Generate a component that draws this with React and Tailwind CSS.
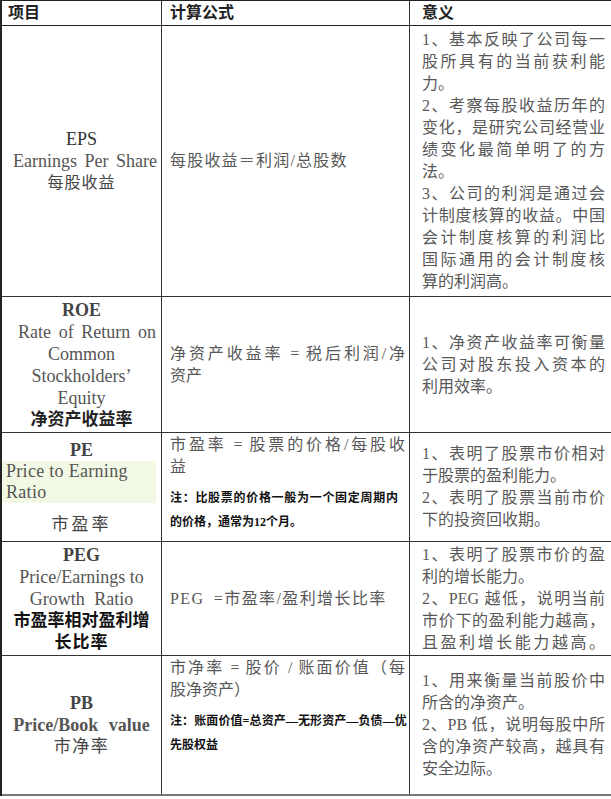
import React from 'react';
import clsx from 'clsx';

const rows = [
  {
    h: 'h-[271px]',
    item: (
      <>
        <L t="EPS" c="text-[18px] text-[#333]" />
        <L t="Earnings Per Share" c="text-[18px] text-[#555] pl-[11px] pr-[4px]" j />
        <L t="每股收益" c="text-[16px] tracking-[1px] text-[#444]" />
      </>
    ),
    formula: <L t="每股收益＝利润/总股数" c="tracking-[1.2px]" />,
    formulaTop: false,
    meaning: [
      ['1、基本反映了公司每一', 1],
      ['股所具有的当前获利能', 1],
      ['力。', 0],
      ['2、考察每股收益历年的', 1],
      ['变化，是研究公司经营业', 1],
      ['绩变化最简单明了的方', 1],
      ['法。', 0],
      ['3、公司的利润是通过会', 1],
      ['计制度核算的收益。中国', 1],
      ['会计制度核算的利润比', 1],
      ['国际通用的会计制度核', 1],
      ['算的利润高。', 0],
    ],
  },
  {
    h: 'h-[136px]',
    item: (
      <>
        <L t="ROE" c="text-[18px] font-bold text-[#444]" />
        <L t="Rate of Return on" c="text-[18px] text-[#555] pl-[16px] pr-[5px]" j />
        <L t="Common" c="text-[18px] text-[#555]" />
        <L t="Stockholders’" c="text-[18px] text-[#555]" />
        <L t="Equity" c="text-[18px] text-[#555]" />
        <L t="净资产收益率" c="text-[17px] font-bold text-[#222]" />
      </>
    ),
    formula: (
      <>
        <L t="净资产收益率 = 税后利润/净" j />
        <L t="资产" />
      </>
    ),
    formulaTop: false,
    meaning: [
      ['1、净资产收益率可衡量', 1],
      ['公司对股东投入资本的', 1],
      ['利用效率。', 0],
    ],
  },
  {
    h: 'h-[109px]',
    item: (
      <>
        <L t="PE" c="text-[18px] font-bold text-[#444]" />
        <div className="mr-[5px] bg-[#f1f8e3] pl-[4px] text-[18px] text-[#555] text-left">
          <div className="h-[21px] leading-[21px] tracking-[0.3px]">Price to Earning</div>
          <div className="h-[21px] leading-[21px] tracking-[0.3px]">Ratio</div>
        </div>
        <L t="市盈率" c="mt-[11px] text-[17px] tracking-[3px] text-[#444]" />
      </>
    ),
    formula: (
      <>
        <L t="市盈率 = 股票的价格/每股收" j />
        <L t="益" />
        <Note t="注：比股票的价格一般为一个固定周期内" c="mt-[8px] tracking-[0.7px]" />
        <Note t="的价格，通常为12个月。" />
      </>
    ),
    formulaTop: true,
    meaning: [
      ['1、表明了股票市价相对', 1],
      ['于股票的盈利能力。', 0],
      ['2、表明了股票当前市价', 1],
      ['下的投资回收期。', 0],
    ],
  },
  {
    h: 'h-[114px]',
    item: (
      <>
        <L t="PEG" c="text-[18px] font-bold text-[#444]" />
        <L t="Price/Earnings to" c="text-[18px] text-[#555]" />
        <L t="Growth Ratio" c="text-[18px] text-[#555] [word-spacing:5px]" />
        <L t="市盈率相对盈利增" c="text-[17px] font-bold text-[#111]" />
        <L t="长比率" c="text-[17px] font-bold text-[#111] tracking-[1px]" />
      </>
    ),
    formula: <L t="PEG =市盈率/盈利增长比率" c="tracking-[1.4px] [word-spacing:4px]" />,
    formulaTop: false,
    meaning: [
      ['1、表明了股票市价的盈', 1],
      ['利的增长能力。', 0],
      ['2、PEG 越低，说明当前', 1],
      ['市价下的盈利能力越高，', 1],
      ['且盈利增长能力越高。', 1],
    ],
  },
  {
    h: 'h-[140px]',
    item: (
      <>
        <L t="PB" c="text-[18px] font-bold text-[#444]" />
        <L t="Price/Book value" c="text-[18px] font-bold text-[#555] [word-spacing:6px]" />
        <L t="市净率" c="text-[17px] tracking-[1.5px] text-[#444]" />
      </>
    ),
    formula: (
      <>
        <L t="市净率 = 股价 / 账面价值（每" j />
        <L t="股净资产）" />
        <Note t="注：账面价值=总资产—无形资产—负债—优" c="mt-[8px] tracking-[0.1px]" />
        <Note t="先股权益" />
      </>
    ),
    formulaTop: true,
    meaning: [
      ['1、用来衡量当前股价中', 1],
      ['所含的净资产。', 0],
      ['2、PB 低，说明每股中所', 1],
      ['含的净资产较高，越具有', 1],
      ['安全边际。', 0],
    ],
  },
];

function L({ t, j, c }) {
  return (
    <div className={clsx('h-[22px] leading-[22px]', j && 'text-justify [text-align-last:justify]', c)}>
      {t}
    </div>
  );
}

function Note({ t, c }) {
  return (
    <div className={clsx('h-[24px] leading-[24px] whitespace-nowrap text-[12px] font-bold text-[#111]', c)}>
      {t}
    </div>
  );
}

export default function App() {
  return (
    <div className="w-[611px] h-[799px] overflow-hidden bg-white font-['Liberation_Serif','Noto_Sans_CJK_SC',serif] text-[16px] text-[#585858]">
      <div className="w-[611px] border-l-2 border-t border-[#222]">
        <div className="grid h-[25px] grid-cols-[160px_248px_201px] border-b border-[#222]">
          <div className="border-r border-[#333] pl-[6px] text-[16px] font-bold leading-[24px] text-[#222]">项目</div>
          <div className="border-r border-[#333] pl-[8px] text-[16px] font-bold leading-[24px] text-[#222]">计算公式</div>
          <div className="pl-[12px] text-[16px] font-bold leading-[24px] text-[#222]">意义</div>
        </div>

        {rows.map((r, i) => (
          <div
            key={i}
            className={clsx(
              'grid grid-cols-[160px_248px_201px]',
              r.h,
              i === rows.length - 1 ? 'border-b-2 border-b-[#777]' : 'border-b border-[#333]'
            )}
          >
            <div className="flex flex-col justify-center border-r border-[#333] text-center">{r.item}</div>
            <div
              className={clsx(
                'flex flex-col border-r border-[#333] pl-[8px] pr-[4px]',
                r.formulaTop ? 'justify-start pt-px' : 'justify-center'
              )}
            >
              {r.formula}
            </div>
            <div className="flex flex-col justify-center pl-[12px] pr-[6px]">
              {r.meaning.map(([t, j], k) => (
                <L key={k} t={t} j={j} />
              ))}
            </div>
          </div>
        ))}
      </div>
    </div>
  );
}
